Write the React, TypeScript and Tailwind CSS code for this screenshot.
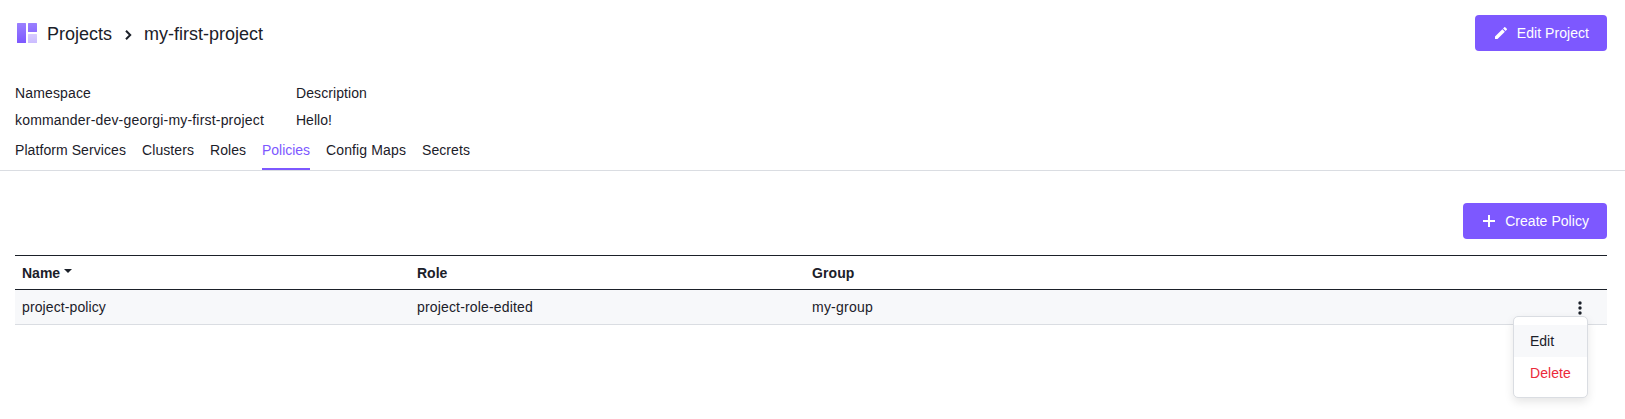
import React from 'react';

const tabs = [
  { label: 'Platform Services', className: 'tracking-[0.076px]' },
  { label: 'Clusters', className: 'tracking-[0.081px]' },
  { label: 'Roles', className: 'tracking-[0.04px]' },
  { label: 'Policies', className: 'tracking-[-0.03px]' },
  { label: 'Config Maps', className: 'tracking-[0.127px]' },
  { label: 'Secrets', className: 'tracking-[0.07px]' },
];

function ProjectIcon() {
  return (
    <svg width="20" height="20" viewBox="0 0 20 20" className="ml-0.5">
      <defs>
        <linearGradient id="tile" x1="0" y1="0" x2="0" y2="20" gradientUnits="userSpaceOnUse">
          <stop offset="0" stopColor="#9a80ff" />
          <stop offset="1" stopColor="#7d58ff" />
        </linearGradient>
        <linearGradient id="tileLight" x1="0" y1="11" x2="0" y2="20" gradientUnits="userSpaceOnUse">
          <stop offset="0" stopColor="#d8ccff" />
          <stop offset="1" stopColor="#cbbcff" />
        </linearGradient>
      </defs>
      <rect width="9" height="20" rx="0.5" fill="url(#tile)" />
      <rect x="11" width="9" height="9" rx="0.5" fill="url(#tile)" />
      <rect x="11" y="11" width="9" height="9" rx="0.5" fill="url(#tileLight)" />
    </svg>
  );
}

function Button({ icon, children }: { icon: React.ReactNode; children: React.ReactNode }) {
  return (
    <button className="flex h-9 items-center gap-2 rounded bg-[#7d58ff] px-[18px] text-sm tracking-[0.045px] text-white">
      {icon}
      <span>{children}</span>
    </button>
  );
}

export default function App() {
  return (
    <div className="h-[419px] overflow-hidden bg-white font-['Liberation_Sans',Arial,sans-serif] text-sm text-[#1b2029]">
      <header className="flex items-start justify-between pt-[15px] pr-[18px] pl-[15px]">
        <div className="flex h-9 items-center text-[18px] leading-[26px]">
          <ProjectIcon />
          <span className="mt-0.5 ml-[10px]">Projects</span>
          <svg width="16" height="16" viewBox="0 0 16 16" className="mx-2 mt-1" fill="none" stroke="currentColor" strokeWidth="2">
            <path d="M6 3.8 10.2 8 6 12.2" />
          </svg>
          <span className="mt-0.5">my-first-project</span>
        </div>
        <Button
          icon={
            <svg width="16" height="16" viewBox="0 0 16 16" fill="currentColor">
              <path d="M2 11.5V14h2.5l7.37-7.37-2.5-2.5zM13.8 4.7a.66.66 0 0 0 0-.94L12.24 2.2a.66.66 0 0 0-.94 0l-1.22 1.22 2.5 2.5z" />
            </svg>
          }
        >
          Edit Project
        </Button>
      </header>

      <dl className="mt-[29px] flex gap-8 pl-[15px] leading-[27px]">
        <div>
          <dt className="tracking-[0.14px]">Namespace</dt>
          <dd className="tracking-[0.19px]">kommander-dev-georgi-my-first-project</dd>
        </div>
        <div>
          <dt className="tracking-[0.087px]">Description</dt>
          <dd className="tracking-[0.03px]">Hello!</dd>
        </div>
      </dl>

      <nav className="flex h-[37px] gap-4 border-b border-[#dadde2] pl-[15px] leading-5">
        {tabs.map(({ label, className }) => (
          <a
            key={label}
            className={`${className} h-9 pt-1.5 ${
              label === 'Policies' ? 'border-b-2 border-[#7d58ff] text-[#7d58ff]' : ''
            }`}
          >
            {label}
          </a>
        ))}
      </nav>

      <main className="pt-8 pr-[18px] pl-[15px]">
        <div className="flex justify-end">
          <Button
            icon={
              <svg width="16" height="16" viewBox="0 0 16 16" fill="currentColor">
                <path d="M7 2h2v5h5v2H9v5H7V9H2V7h5z" />
              </svg>
            }
          >
            Create Policy
          </Button>
        </div>

        <div className="mt-4">
          <div className="grid h-[35px] grid-cols-[395px_395px_1fr] items-end border-y border-[#1b2029] pb-1.5 leading-5 font-bold">
            <div className="flex items-center pl-[7px]">
              Name
              <svg width="8" height="4" viewBox="0 0 8 4" className="mb-1 ml-1" fill="currentColor">
                <path d="M0 0h8L4 4z" />
              </svg>
            </div>
            <div className="pl-[7px]">Role</div>
            <div className="pl-[7px] tracking-[0.1px]">Group</div>
          </div>
          <div className="relative grid h-[35px] grid-cols-[395px_395px_1fr_54px] items-center border-b border-[#dadde2] bg-[#f7f8fa]">
            <div className="pl-[7px] tracking-[0.107px]">project-policy</div>
            <div className="pl-[7px] tracking-[0.165px]">project-role-edited</div>
            <div className="pl-[7px] tracking-[0.23px]">my-group</div>
            <button className="flex justify-center">
              <svg width="4" height="14" viewBox="0 0 4 14" className="mt-0.5" fill="currentColor">
                <circle cx="2" cy="2" r="1.7" />
                <circle cx="2" cy="7" r="1.7" />
                <circle cx="2" cy="12" r="1.7" />
              </svg>
            </button>
            <div className="absolute top-[26px] right-[19px] w-[75px] rounded-[5px] border border-[#dadde2] bg-white py-2 leading-8 shadow-[0_4px_10px_rgba(0,0,0,0.1)]">
              <div className="bg-[#f7f8fa] pl-4">Edit</div>
              <div className="pl-4 tracking-[0.08px] text-[#eb293a]">Delete</div>
            </div>
          </div>
        </div>
      </main>
    </div>
  );
}
